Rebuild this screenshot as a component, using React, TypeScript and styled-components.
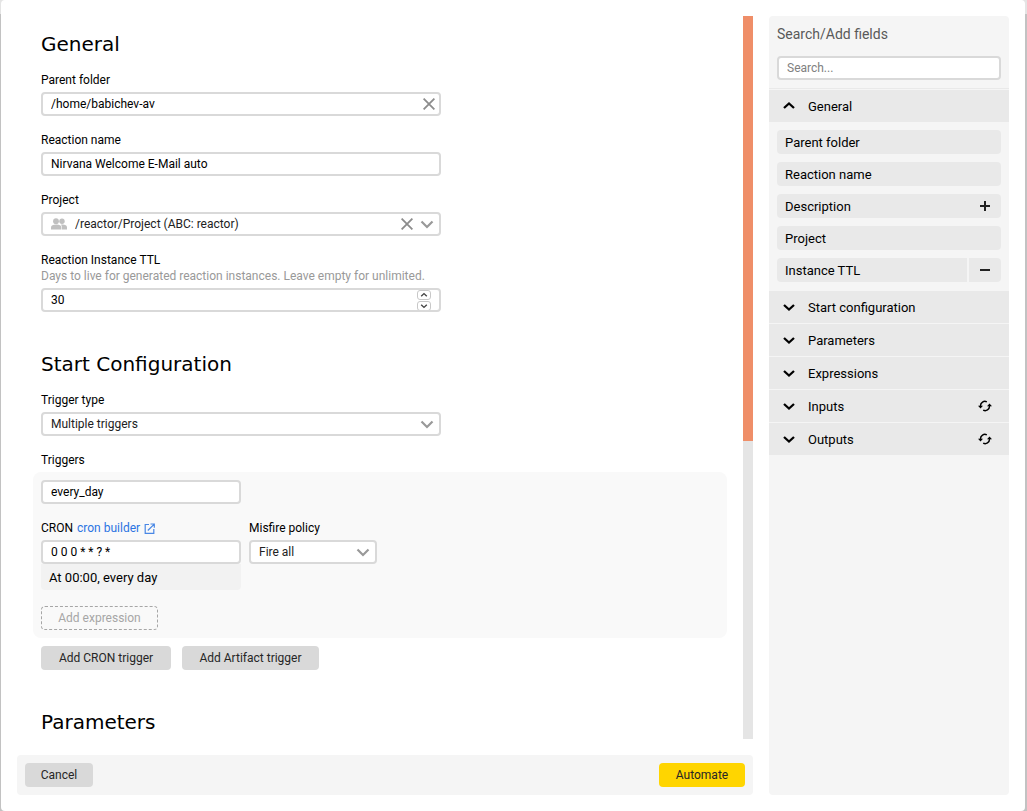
import React, { useState } from "react";
import styled, { createGlobalStyle, css } from "styled-components";

const GlobalStyle = createGlobalStyle`
  *, *::before, *::after { box-sizing: border-box; }
  body {
    margin: 0;
    background: linear-gradient(#e4e4e4 14px, #c2c2c2 14px);
    color: #000;
    font: 12px/16px Roboto, "Noto Sans", sans-serif;
  }
  button, input, select { font: inherit; color: inherit; }
`;

const Dialog = styled.div`
  display: grid;
  grid-template-columns: minmax(0, 1fr) 240px;
  gap: 16px;
  height: 100vh;
  margin: 0 2px 0 1px;
  padding: 16px;
  background: #fff;
  border-radius: 4px;
`;

const Main = styled.main`
  display: flex;
  flex-direction: column;
  gap: 16px;
  min-height: 0;
`;

const ScrollRow = styled.div`
  display: flex;
  flex: 1;
  gap: 16px;
  min-height: 0;
`;

const Form = styled.form`
  flex: 1;
  min-width: 0;
  padding: 16px 0 0 16px;
  overflow-y: auto;
  scrollbar-width: none;
`;

const Track = styled.div`
  width: 10px;
  background: #e5e5e5;
`;

const Thumb = styled.div`
  height: 58.8%;
  background: #ef8e68;
`;

const Footer = styled.footer`
  display: flex;
  justify-content: space-between;
  padding: 8px;
  background: #f5f5f5;
  border-radius: 4px;
`;

const Section = styled.section`
  margin: 0 0 40px 8px;
`;

const Heading = styled.h2`
  margin: 0 0 16px;
  font: 20px/24px "DejaVu Sans", sans-serif;
`;

const FieldBox = styled.div`
  display: flex;
  flex-direction: column;
  max-width: 400px;
  margin-bottom: 16px;
`;

const Label = styled.label`
  margin-bottom: 4px;
`;

const Hint = styled.p`
  margin: -4px 0 4px;
  color: #999;
`;

const Box = styled.div<{ $select?: boolean }>`
  display: flex;
  align-items: center;
  height: 24px;
  padding-right: ${(p) => (p.$select ? 2 : 0)}px;
  background: #fff;
  border: 2px solid #d9d9d9;
  border-radius: 4px;
  overflow: hidden;
`;

const controlStyle = css`
  flex: 1;
  min-width: 0;
  height: 20px;
  padding: 0 8px;
  background: none;
  border: 0;
  outline: 0;
  appearance: none;
`;

const TextInput = styled.input`
  ${controlStyle}
  &[type="number"] { appearance: textfield; }
  &::-webkit-inner-spin-button { display: none; }
  &::placeholder { color: #808080; opacity: 1; }
`;

const SelectInput = styled.select`
  ${controlStyle}
  color: #222;
`;

const IconSlot = styled.span`
  display: flex;
  flex: none;
  align-items: center;
  justify-content: center;
  width: 20px;
  color: #999;
  pointer-events: none;
`;

const ClearButton = styled.button`
  display: flex;
  flex: none;
  align-items: center;
  justify-content: center;
  width: 20px;
  height: 20px;
  padding: 0;
  background: none;
  border: 0;
  color: #8c8c8c;
`;

const PeopleSlot = styled.span`
  display: flex;
  flex: none;
  padding-left: 8px;
  color: #c0c0c0;
`;

const Spinner = styled.div`
  display: flex;
  flex-direction: column;
  justify-content: center;
  gap: 1px;
  margin-right: 8px;
`;

const SpinButton = styled.button`
  display: flex;
  flex: none;
  align-items: center;
  justify-content: center;
  width: 14px;
  height: 10px;
  padding: 0;
  background: #fff;
  border: 1px solid #c8c8c8;
  border-radius: 3px;
  color: #444;
`;

const TriggerPanel = styled.div`
  margin: 4px 0 8px -8px;
  padding: 8px;
  background: #f9f9f9;
  border-radius: 8px;
`;

const TriggerName = styled(Box)`
  max-width: 200px;
  margin-bottom: 16px;
`;

const TriggerRow = styled.div`
  display: grid;
  grid-template-columns: 200px 128px;
  gap: 8px;
  margin-bottom: 16px;
`;

const LabelLine = styled.div`
  display: flex;
  gap: 4px;
  margin-bottom: 4px;
`;

const BuilderLink = styled.a`
  display: flex;
  align-items: center;
  gap: 4px;
  color: #2b74e2;
  text-decoration: none;
`;

const CronSummary = styled.output`
  display: block;
  padding: 6px 8px 4px;
  background: #f2f2f2;
  border-radius: 0 0 4px 4px;
  font-size: 13px;
`;

const buttonColors = {
  normal: "#d9d9d9",
  action: "#ffd500",
  pseudo: "transparent",
};

const Button = styled.button<{ $view?: keyof typeof buttonColors; $minWidth?: number }>`
  height: 24px;
  min-width: ${(p) => p.$minWidth ?? 68}px;
  padding: 0 15px;
  background: ${(p) => buttonColors[p.$view ?? "normal"]};
  border: ${(p) => (p.$view === "pseudo" ? "1px dashed #a6a6a6" : "0")};
  border-radius: 4px;
  color: ${(p) => (p.$view === "pseudo" ? "#a6a6a6" : "#262626")};
`;

const ButtonRow = styled.div`
  display: flex;
  gap: 11px;
`;

const Sidebar = styled.aside`
  min-height: 0;
  background: #f5f5f5;
  border-radius: 4px;
  font-size: 13px;
`;

const SidebarTop = styled.div`
  display: flex;
  flex-direction: column;
  gap: 12px;
  padding: 8px;
  border-bottom: 1px solid #e9e9e9;
`;

const SidebarTitle = styled.label`
  color: #595959;
  font-size: 14px;
  line-height: 20px;
`;

const SearchBox = styled(Box)`
  font-size: 12px;
`;

const GroupList = styled.div`
  display: flex;
  flex-direction: column;
  gap: 1px;
  padding-top: 1px;
`;

const GroupHeader = styled.div`
  display: flex;
  align-items: center;
  height: 32px;
  padding: 0 12px;
  background: #e9e9e9;
`;

const GroupToggle = styled.button`
  display: flex;
  flex: 1;
  align-items: center;
  gap: 11px;
  padding: 0;
  background: none;
  border: 0;
  line-height: 18px;
  text-align: left;
`;

const GroupName = styled.span`
  padding-top: 2px;
`;

const IconButton = styled.button`
  display: flex;
  align-items: center;
  justify-content: center;
  width: 24px;
  height: 24px;
  padding: 0;
  background: none;
  border: 0;
`;

const FieldList = styled.ul`
  display: flex;
  flex-direction: column;
  gap: 8px;
  margin: 0;
  padding: 7px 8px 8px;
  list-style: none;
`;

const FieldItem = styled.li`
  display: flex;
  height: 24px;
  border-radius: 4px;
  overflow: hidden;
`;

const FieldName = styled.span`
  flex: 1;
  padding: 5px 8px 3px;
  background: #e9e9e9;
`;

const FieldAction = styled.button<{ $split?: boolean }>`
  display: flex;
  align-items: center;
  justify-content: center;
  width: 32px;
  margin-left: ${(p) => (p.$split ? 2 : 0)}px;
  padding: 0;
  background: #e9e9e9;
  border: 0;
`;

const Chevron = () => (
  <svg width="14" height="14" viewBox="0 0 14 14" fill="none" stroke="currentColor" strokeWidth="2.2" aria-hidden="true">
    <path d="M1.5 4.5 7 10l5.5-5.5" />
  </svg>
);

const GroupChevron = ({ up }: { up?: boolean }) => (
  <svg width="16" height="16" viewBox="0 0 16 16" fill="none" stroke="currentColor" strokeWidth="2.3" aria-hidden="true">
    <path d={up ? "M3 10l5-4.500L13 10" : "M3 6l5 4.500L13 6"} />
  </svg>
);

const Cross = () => (
  <svg width="12" height="12" viewBox="0 0 12 12" fill="none" stroke="currentColor" strokeWidth="1.8" aria-hidden="true">
    <path d="M.6.6l10.8 10.8M11.4.6.6 11.4" />
  </svg>
);

const People = () => (
  <svg width="16" height="12" viewBox="0 0 16 12" fill="currentColor" aria-hidden="true">
    <circle cx="5" cy="3.2" r="2.9" />
    <circle cx="11" cy="3.2" r="2.7" />
    <path d="M0 11.6V9.4C0 7.4 2.2 6.6 5 6.6s5.4.8 5.4 2.8v2.2z" />
    <path d="M11 11.6V9.4c0-1.2-.4-2.1-1.2-2.7 3.5-.5 6.2.5 6.2 2.7v2.2z" />
  </svg>
);

const External = () => (
  <svg width="11" height="11" viewBox="0 0 11 11" fill="none" stroke="currentColor" aria-hidden="true" opacity=".85">
    <path d="M5 1.5H1.2v8.8h8.6V6M6.5 1h3.8v3.8M10 1.3 3.8 7.5" strokeWidth="1.2" />
  </svg>
);

const Refresh = () => (
  <svg width="14" height="12" viewBox="0 0 14 12" fill="none" stroke="currentColor" strokeWidth="1.5" aria-hidden="true">
    <path d="M2.5 7V5.8A4.3 4.3 0 0 1 8.8 1.9M11.5 5v1.2A4.3 4.3 0 0 1 5.2 10.1" />
    <path d="M0 5.8h5L2.5 8.6zM9 6.2h5L11.5 3.4z" fill="currentColor" stroke="none" />
  </svg>
);

const SpinArrow = ({ up }: { up?: boolean }) => (
  <svg width="8" height="6" viewBox="0 0 8 6" fill="none" stroke="currentColor" strokeWidth="1.4" aria-hidden="true">
    <path d={up ? "M1.2 4.3 4 1.6l2.8 2.7" : "M1.2 1.7 4 4.4l2.8-2.7"} />
  </svg>
);

const Sign = ({ plus }: { plus?: boolean }) => (
  <svg width="10" height="10" viewBox="0 0 10 10" fill="#222" aria-hidden="true">
    <path d={plus ? "M0 4h4V0h2v4h4v2H6v4H4V6H0z" : "M0 4h10v2H0z"} />
  </svg>
);

type FieldProps = {
  id: string;
  label: string;
  hint?: string;
  select?: boolean;
  children: React.ReactNode;
};

const Field = ({ id, label, hint, select, children }: FieldProps) => (
  <FieldBox>
    <Label htmlFor={id}>{label}</Label>
    {hint && <Hint>{hint}</Hint>}
    <Box $select={select}>{children}</Box>
  </FieldBox>
);

const fields: { name: string; action?: "add" | "remove" }[] = [
  { name: "Parent folder" },
  { name: "Reaction name" },
  { name: "Description", action: "add" },
  { name: "Project" },
  { name: "Instance TTL", action: "remove" },
];

const groups = [
  { name: "Start configuration" },
  { name: "Parameters" },
  { name: "Expressions" },
  { name: "Inputs", refresh: true },
  { name: "Outputs", refresh: true },
];

export default function App() {
  const [folder, setFolder] = useState("/home/babichev-av");
  const [ttl, setTtl] = useState(30);
  const [open, setOpen] = useState(true);

  return (
    <>
      <GlobalStyle />
      <Dialog>
        <Main>
          <ScrollRow>
            <Form>
              <Section>
                <Heading>General</Heading>
                <Field id="folder" label="Parent folder">
                  <TextInput id="folder" value={folder} onChange={(e) => setFolder(e.target.value)} />
                  <ClearButton type="button" aria-label="Clear parent folder" onClick={() => setFolder("")}>
                    <Cross />
                  </ClearButton>
                </Field>
                <Field id="name" label="Reaction name">
                  <TextInput id="name" defaultValue="Nirvana Welcome E-Mail auto" />
                </Field>
                <Field id="project" label="Project" select>
                  <PeopleSlot>
                    <People />
                  </PeopleSlot>
                  <SelectInput id="project">
                    <option>/reactor/Project (ABC: reactor)</option>
                  </SelectInput>
                  <ClearButton type="button" aria-label="Clear project">
                    <Cross />
                  </ClearButton>
                  <IconSlot>
                    <Chevron />
                  </IconSlot>
                </Field>
                <Field
                  id="ttl"
                  label="Reaction Instance TTL"
                  hint="Days to live for generated reaction instances. Leave empty for unlimited."
                >
                  <TextInput id="ttl" type="number" value={ttl} onChange={(e) => setTtl(Number(e.target.value))} />
                  <Spinner>
                    <SpinButton type="button" aria-label="Increase" onClick={() => setTtl(ttl + 1)}>
                      <SpinArrow up />
                    </SpinButton>
                    <SpinButton type="button" aria-label="Decrease" onClick={() => setTtl(ttl - 1)}>
                      <SpinArrow />
                    </SpinButton>
                  </Spinner>
                </Field>
              </Section>

              <Section>
                <Heading>Start Configuration</Heading>
                <Field id="trigger-type" label="Trigger type" select>
                  <SelectInput id="trigger-type">
                    <option>Multiple triggers</option>
                  </SelectInput>
                  <IconSlot>
                    <Chevron />
                  </IconSlot>
                </Field>
                <Label htmlFor="trigger-name">Triggers</Label>
                <TriggerPanel>
                  <TriggerName>
                    <TextInput id="trigger-name" defaultValue="every_day" />
                  </TriggerName>
                  <TriggerRow>
                    <div>
                      <LabelLine>
                        <label htmlFor="cron">CRON</label>
                        <BuilderLink href="#cron-builder">
                          cron builder <External />
                        </BuilderLink>
                      </LabelLine>
                      <Box>
                        <TextInput id="cron" defaultValue="0 0 0 * * ? *" />
                      </Box>
                      <CronSummary htmlFor="cron">At 00:00, every day</CronSummary>
                    </div>
                    <div>
                      <LabelLine>
                        <label htmlFor="misfire">Misfire policy</label>
                      </LabelLine>
                      <Box $select>
                        <SelectInput id="misfire">
                          <option>Fire all</option>
                        </SelectInput>
                        <IconSlot>
                          <Chevron />
                        </IconSlot>
                      </Box>
                    </div>
                  </TriggerRow>
                  <Button type="button" $view="pseudo" $minWidth={117}>
                    Add expression
                  </Button>
                </TriggerPanel>
                <ButtonRow>
                  <Button type="button" $minWidth={130}>
                    Add CRON trigger
                  </Button>
                  <Button type="button" $minWidth={137}>
                    Add Artifact trigger
                  </Button>
                </ButtonRow>
              </Section>

              <Section>
                <Heading>Parameters</Heading>
              </Section>
            </Form>
            <Track>
              <Thumb />
            </Track>
          </ScrollRow>
          <Footer>
            <Button type="button">Cancel</Button>
            <Button type="submit" $view="action" $minWidth={86}>
              Automate
            </Button>
          </Footer>
        </Main>

        <Sidebar>
          <SidebarTop>
            <SidebarTitle htmlFor="search">Search/Add fields</SidebarTitle>
            <SearchBox>
              <TextInput id="search" placeholder="Search..." />
            </SearchBox>
          </SidebarTop>
          <GroupList>
            <GroupHeader>
              <GroupToggle type="button" aria-expanded={open} onClick={() => setOpen(!open)}>
                <GroupChevron up={open} />
                <GroupName>General</GroupName>
              </GroupToggle>
            </GroupHeader>
            {open && (
              <FieldList>
                {fields.map(({ name, action }) => (
                  <FieldItem key={name}>
                    <FieldName>{name}</FieldName>
                    {action && (
                      <FieldAction type="button" $split={action === "remove"} aria-label={`${action} ${name}`}>
                        <Sign plus={action === "add"} />
                      </FieldAction>
                    )}
                  </FieldItem>
                ))}
              </FieldList>
            )}
            {groups.map(({ name, refresh }) => (
              <GroupHeader key={name}>
                <GroupToggle type="button" aria-expanded={false}>
                  <GroupChevron />
                  <GroupName>{name}</GroupName>
                </GroupToggle>
                {refresh && (
                  <IconButton type="button" aria-label={`Refresh ${name}`}>
                    <Refresh />
                  </IconButton>
                )}
              </GroupHeader>
            ))}
          </GroupList>
        </Sidebar>
      </Dialog>
    </>
  );
}
